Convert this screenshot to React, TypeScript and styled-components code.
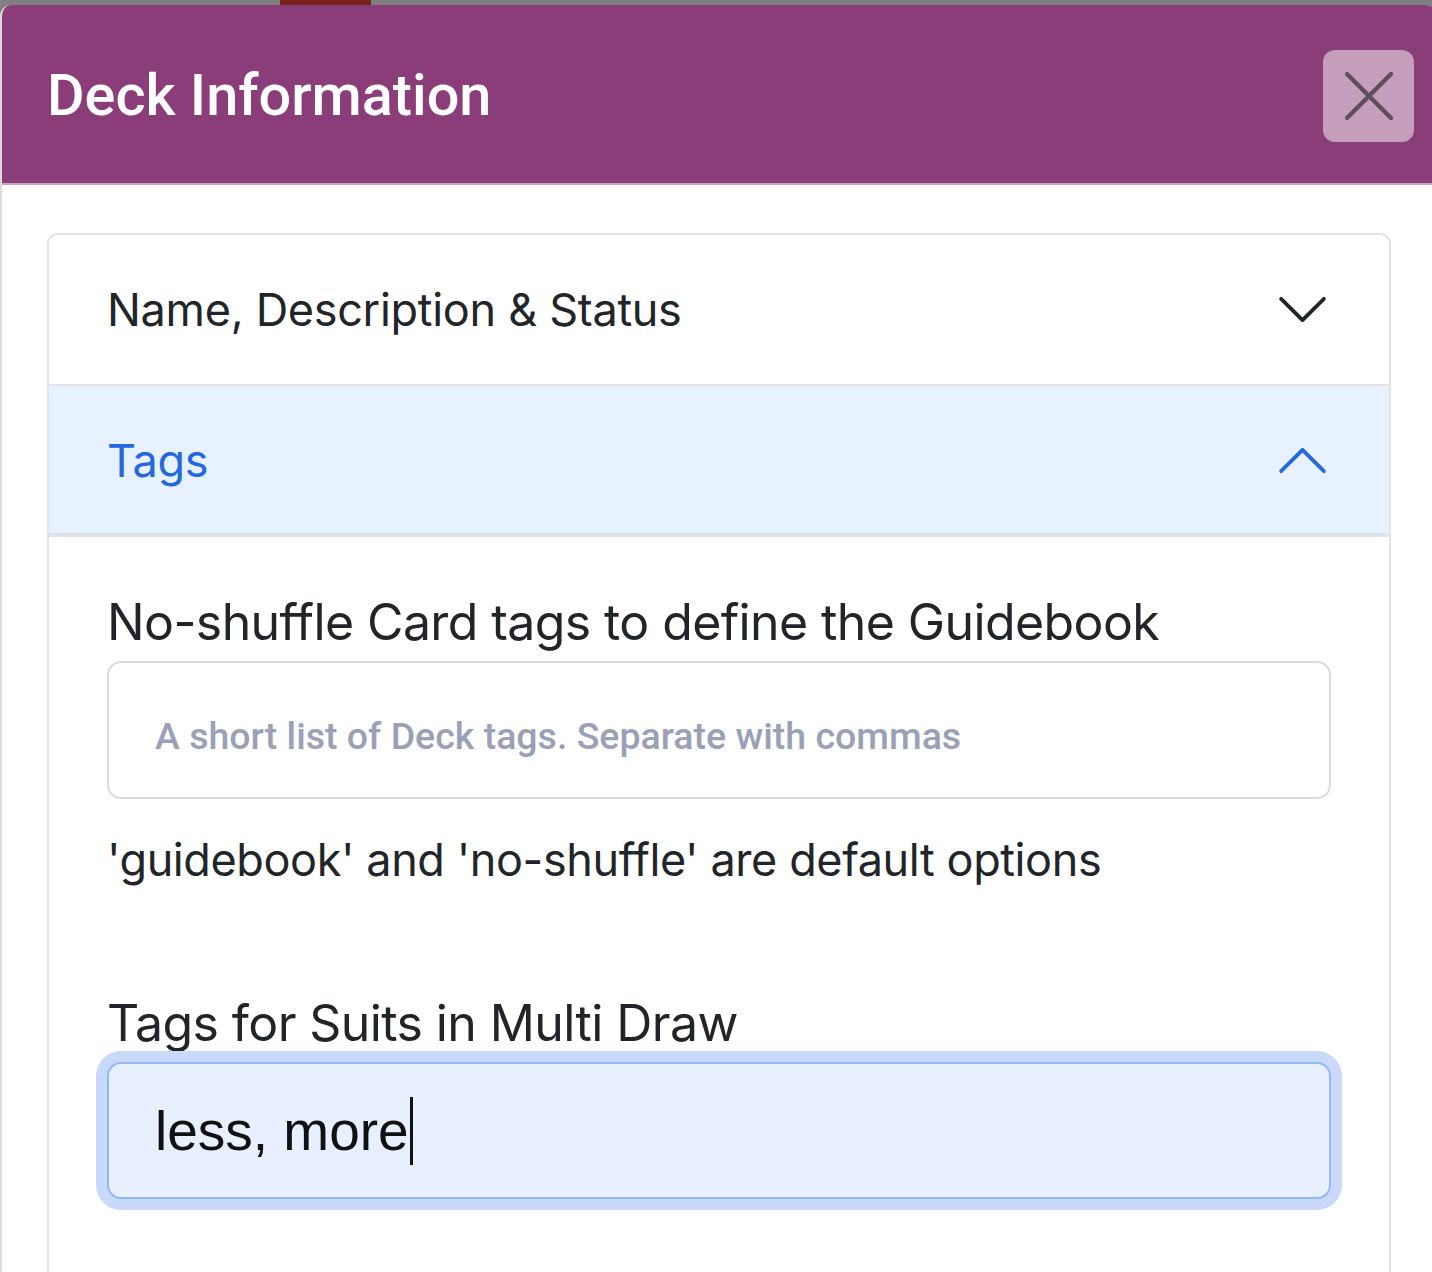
import styled, { createGlobalStyle } from "styled-components";

const GlobalStyle = createGlobalStyle`
  html, body {
    margin: 0;
    padding: 0;
    background: #7f7f7f;
    overflow: hidden;
  }
  * {
    box-sizing: border-box;
  }
`;

const Stage = styled.div`
  position: relative;
  height: 1272px;
  padding-top: 5px;
  overflow: hidden;
`;

// a piece of the page that peeks out above the modal
const PageChip = styled.div`
  position: absolute;
  top: 0;
  left: 280px;
  width: 91px;
  height: 6px;
  background: #7a2020;
`;

const Modal = styled.div`
  position: relative;
  width: 1437px;
  height: 1280px;
  background: #fff;
  border-left: 2px solid #dcdcdc;
  border-radius: 11px 11px 0 0;
  overflow: hidden;
  display: flex;
  flex-direction: column;
`;

const Header = styled.div`
  flex: 0 0 180px;
  display: flex;
  align-items: center;
  justify-content: space-between;
  padding: 4px 23px 0 45px;
  background: #8a3d78;
  border-bottom: 2px solid #c9a6c2;
`;

const Title = styled.h5`
  margin: 0;
  font-family: Roboto, "Noto Sans", sans-serif;
  font-weight: 500;
  font-size: 57.6px;
  line-height: 1.2;
  color: #fff;
`;

const CloseButton = styled.button`
  width: 91px;
  height: 92px;
  padding: 0;
  border: none;
  border-radius: 12px;
  background: rgba(255, 255, 255, 0.5);
  display: flex;
  align-items: center;
  justify-content: center;
  cursor: pointer;
`;

const Body = styled.div`
  flex: 1;
  padding: 48px 46px 0 45px;
`;

const Accordion = styled.div`
  border: 2px solid #e3e3e3;
  border-bottom: none;
  border-radius: 11px 11px 0 0;
  height: 100%;
  overflow: hidden;
`;

const ItemHeader = styled.button<{ $active?: boolean }>`
  width: 100%;
  height: 151px;
  display: flex;
  align-items: center;
  justify-content: space-between;
  padding: 0 58px;
  border: none;
  border-bottom: 2px solid #e3e3e3;
  background: ${({ $active }) => ($active ? "#e7f1ff" : "#fff")};
  box-shadow: ${({ $active }) =>
    $active ? "inset 0 -2px 0 rgba(0, 0, 0, 0.06)" : "none"};
  color: ${({ $active }) => ($active ? "#2468e0" : "#212529")};
  font-family: Inter, "Noto Sans", sans-serif;
  font-size: 45px;
  letter-spacing: -0.3px;
  text-align: left;
  cursor: pointer;
`;

const Chevron = styled.svg<{ $up?: boolean }>`
  width: 57px;
  height: 57px;
  transform: ${({ $up }) => ($up ? "rotate(180deg)" : "none")};
`;

const ItemBody = styled.div`
  padding: 55px 58px 0 58px;
  display: flex;
  flex-direction: column;
`;

const Field = styled.div<{ $gap?: number }>`
  display: flex;
  flex-direction: column;
  margin-bottom: ${({ $gap = 0 }) => $gap}px;
`;

const Label = styled.label`
  font-family: Inter, "Noto Sans", sans-serif;
  font-size: 50px;
  letter-spacing: -0.6px;
  line-height: 1.2;
  color: #212529;
  margin-bottom: 9px;
`;

const Help = styled.div`
  font-family: Inter, "Noto Sans", sans-serif;
  font-size: 45px;
  letter-spacing: -0.4px;
  line-height: 1.2;
  color: #212529;
  margin-top: 34px;
`;

const Input = styled.input`
  width: 100%;
  height: 138px;
  padding: 0 46px;
  border: 2px solid #d9dce1;
  border-radius: 14px;
  background: #fff;
  font-family: "Liberation Sans", Arial, sans-serif;
  font-size: 55px;
  color: #111;
  outline: none;

  &::placeholder {
    font-family: Roboto, "Noto Sans", sans-serif;
    font-weight: 500;
    font-size: 37.5px;
    color: #9aa1b6;
  }
`;

const ValueBox = styled.div`
  width: 100%;
  height: 137px;
  display: flex;
  align-items: center;
  padding: 0 46px;
  border: 2px solid #8fb9fb;
  border-radius: 14px;
  background: #e8f0fe;
  box-shadow: 0 0 0 11px #c9d9fb;
  font-family: "Liberation Sans", Arial, sans-serif;
  font-size: 55px;
  color: #111;
`;

const Caret = styled.span`
  display: inline-block;
  width: 3px;
  height: 68px;
  background: #111;
  margin-left: 1px;
`;

const ChevronIcon = ({ up, color }: { up?: boolean; color: string }) => (
  <Chevron $up={up} viewBox="0 0 16 16">
    <path
      d="M2 5L8 11L14 5"
      fill="none"
      stroke={color}
      strokeWidth={1.05}
      strokeLinecap="round"
      strokeLinejoin="round"
    />
  </Chevron>
);

export default function App() {
  return (
    <>
      <GlobalStyle />
      <Stage>
        <PageChip />
        <Modal>
          <Header>
            <Title>Deck Information</Title>
            <CloseButton aria-label="Close">
              <svg width="48" height="48" viewBox="0 0 48 48">
                <path
                  d="M2 2L46 46M46 2L2 46"
                  stroke="#000"
                  strokeOpacity={0.5}
                  strokeWidth={4.5}
                  strokeLinecap="round"
                />
              </svg>
            </CloseButton>
          </Header>
          <Body>
            <Accordion>
              <ItemHeader>
                Name, Description &amp; Status
                <ChevronIcon color="#212529" />
              </ItemHeader>
              <ItemHeader $active>
                Tags
                <ChevronIcon up color="#2468e0" />
              </ItemHeader>
              <ItemBody>
                <Field $gap={106}>
                  <Label>No-shuffle Card tags to define the Guidebook</Label>
                  <Input placeholder="A short list of Deck tags. Separate with commas" />
                  <Help>'guidebook' and 'no-shuffle' are default options</Help>
                </Field>
                <Field>
                  <Label>Tags for Suits in Multi Draw</Label>
                  <ValueBox>
                    less, more
                    <Caret />
                  </ValueBox>
                </Field>
              </ItemBody>
            </Accordion>
          </Body>
        </Modal>
      </Stage>
    </>
  );
}
